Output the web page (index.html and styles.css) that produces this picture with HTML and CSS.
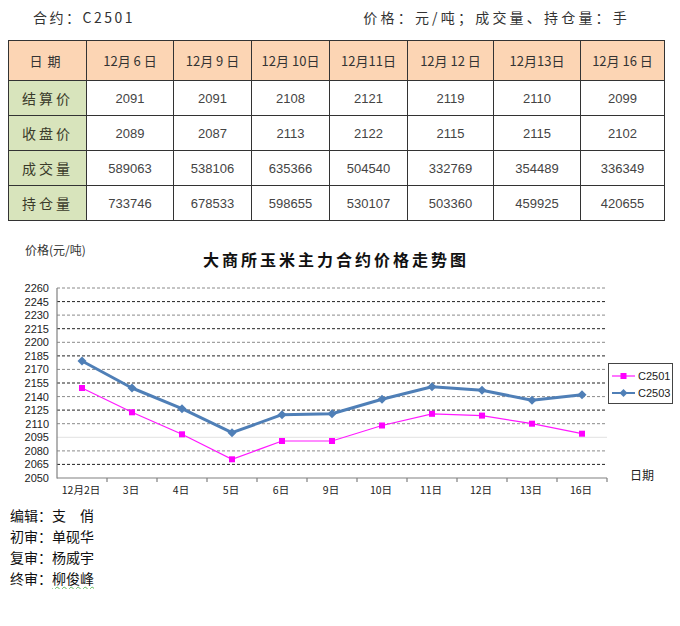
FILE: index.html
```html
<!DOCTYPE html>
<html lang="zh-CN">
<head>
<meta charset="utf-8">
<title>大商所玉米主力合约价格走势图</title>
<link rel="stylesheet" href="styles.css">
</head>
<body>
<div class="page">
  <div class="head">
    <span class="contract">合约：C2501</span>
    <span class="units">价格：元/吨；成交量、持仓量：手</span>
  </div>
  <table class="data">
    <colgroup>
      <col class="c0"><col class="c1"><col class="c2"><col class="c3"><col class="c4"><col class="c5"><col class="c6"><col class="c7">
    </colgroup>
    <thead>
      <tr>
        <th class="label">日期</th>
        <th>12月 6 日</th><th>12月 9 日</th><th>12月 10日</th><th>12月11日</th><th>12月 12 日</th><th>12月13日</th><th>12月 16 日</th>
      </tr>
    </thead>
    <tbody>
      <tr><th class="rowlabel">结算价</th><td>2091</td><td>2091</td><td>2108</td><td>2121</td><td>2119</td><td>2110</td><td>2099</td></tr>
      <tr><th class="rowlabel">收盘价</th><td>2089</td><td>2087</td><td>2113</td><td>2122</td><td>2115</td><td>2115</td><td>2102</td></tr>
      <tr><th class="rowlabel">成交量</th><td>589063</td><td>538106</td><td>635366</td><td>504540</td><td>332769</td><td>354489</td><td>336349</td></tr>
      <tr><th class="rowlabel">持仓量</th><td>733746</td><td>678533</td><td>598655</td><td>530107</td><td>503360</td><td>459925</td><td>420655</td></tr>
    </tbody>
  </table>

  <svg class="chart" width="680" height="284" viewBox="0 0 680 284" xmlns="http://www.w3.org/2000/svg">
    <g transform="translate(0,-220)">
      <text class="ytitle" x="25" y="254">价格(元/吨)</text>
      <text class="ctitle" x="336" y="265" text-anchor="middle">大商所玉米主力合约价格走势图</text>

      <g class="grid">
        <line class="g-light" x1="57" x2="607" y1="287" y2="287"/>
        <line class="g-dark" x1="57" x2="607" y1="300.6" y2="300.6"/>
        <line class="g-light" x1="57" x2="607" y1="314.1" y2="314.1"/>
        <line class="g-dark" x1="57" x2="607" y1="327.7" y2="327.7"/>
        <line class="g-light" x1="57" x2="607" y1="341.3" y2="341.3"/>
        <line class="g-dark" x1="57" x2="607" y1="354.9" y2="354.9"/>
        <line class="g-light" x1="57" x2="607" y1="368.4" y2="368.4"/>
        <line class="g-dark" x1="57" x2="607" y1="382" y2="382"/>
        <line class="g-light" x1="57" x2="607" y1="395.6" y2="395.6"/>
        <line class="g-dark" x1="57" x2="607" y1="409.1" y2="409.1"/>
        <line class="g-light" x1="57" x2="607" y1="422.7" y2="422.7"/>
        <line class="g-faint" x1="57" x2="607" y1="436.3" y2="436.3"/>
        <line class="g-light" x1="57" x2="607" y1="449.9" y2="449.9"/>
        <line class="g-dark" x1="57" x2="607" y1="463.4" y2="463.4"/>
      </g>

      <g class="ylab" text-anchor="end">
        <text x="49" y="291">2260</text>
        <text x="49" y="304.6">2245</text>
        <text x="49" y="318.1">2230</text>
        <text x="49" y="331.7">2215</text>
        <text x="49" y="345.3">2200</text>
        <text x="49" y="358.9">2185</text>
        <text x="49" y="372.4">2170</text>
        <text x="49" y="386">2155</text>
        <text x="49" y="399.6">2140</text>
        <text x="49" y="413.1">2125</text>
        <text x="49" y="426.7">2110</text>
        <text x="49" y="440.3">2095</text>
        <text x="49" y="453.9">2080</text>
        <text x="49" y="467.4">2065</text>
        <text x="49" y="481">2050</text>
      </g>

      <g class="axis">
        <line x1="57" y1="287" x2="57" y2="477.5"/>
        <line x1="57" y1="477" x2="607" y2="477"/>
        <line x1="107" y1="477" x2="107" y2="481"/>
        <line x1="157" y1="477" x2="157" y2="481"/>
        <line x1="207" y1="477" x2="207" y2="481"/>
        <line x1="257" y1="477" x2="257" y2="481"/>
        <line x1="307" y1="477" x2="307" y2="481"/>
        <line x1="357" y1="477" x2="357" y2="481"/>
        <line x1="407" y1="477" x2="407" y2="481"/>
        <line x1="457" y1="477" x2="457" y2="481"/>
        <line x1="507" y1="477" x2="507" y2="481"/>
        <line x1="557" y1="477" x2="557" y2="481"/>
        <line x1="607" y1="477" x2="607" y2="481"/>
      </g>

      <g class="xlab" text-anchor="middle">
        <text x="81" y="493">12月2日</text>
        <text x="131" y="493">3日</text>
        <text x="181" y="493">4日</text>
        <text x="231" y="493">5日</text>
        <text x="281" y="493">6日</text>
        <text x="331" y="493">9日</text>
        <text x="381" y="493">10日</text>
        <text x="431" y="493">11日</text>
        <text x="481" y="493">12日</text>
        <text x="531" y="493">13日</text>
        <text x="581" y="493">16日</text>
      </g>
      <text class="xtitle" x="630" y="479">日期</text>

      <polyline class="s-blue" points="82,360 132,387 182,407.7 232,431.7 282,413.7 332,412.7 382,398.3 432,385.7 482,389.3 532,399.3 582,393.7"/>
      <g class="m-blue">
        <path d="M82 355.5 L86.5 360 L82 364.5 L77.5 360 Z"/>
        <path d="M132 382.5 L136.5 387 L132 391.5 L127.5 387 Z"/>
        <path d="M182 403.2 L186.5 407.7 L182 412.2 L177.5 407.7 Z"/>
        <path d="M232 427.2 L236.5 431.7 L232 436.2 L227.5 431.7 Z"/>
        <path d="M282 409.2 L286.5 413.7 L282 418.2 L277.5 413.7 Z"/>
        <path d="M332 408.2 L336.5 412.7 L332 417.2 L327.5 412.7 Z"/>
        <path d="M382 393.8 L386.5 398.3 L382 402.8 L377.5 398.3 Z"/>
        <path d="M432 381.2 L436.5 385.7 L432 390.2 L427.5 385.7 Z"/>
        <path d="M482 384.8 L486.5 389.3 L482 393.8 L477.5 389.3 Z"/>
        <path d="M532 394.8 L536.5 399.3 L532 403.8 L527.5 399.3 Z"/>
        <path d="M582 389.2 L586.5 393.7 L582 398.2 L577.5 393.7 Z"/>
      </g>

      <polyline class="s-pink" points="82,387 132,411.3 182,433.3 232,458.3 282,440 332,440 382,424.5 432,412.8 482,414.6 532,422.7 582,432.7"/>
      <g class="m-pink">
        <rect x="79" y="384" width="6" height="6"/>
        <rect x="129" y="408.3" width="6" height="6"/>
        <rect x="179" y="430.3" width="6" height="6"/>
        <rect x="229" y="455.3" width="6" height="6"/>
        <rect x="279" y="437" width="6" height="6"/>
        <rect x="329" y="437" width="6" height="6"/>
        <rect x="379" y="421.5" width="6" height="6"/>
        <rect x="429" y="409.8" width="6" height="6"/>
        <rect x="479" y="411.6" width="6" height="6"/>
        <rect x="529" y="419.7" width="6" height="6"/>
        <rect x="579" y="429.7" width="6" height="6"/>
      </g>

      <g class="legend">
        <rect class="lg-box" x="608.5" y="362.5" width="64" height="40"/>
        <line class="s-pink" x1="612" y1="375" x2="635" y2="375"/>
        <rect class="m-pink" x="620.5" y="372" width="6" height="6"/>
        <text x="638" y="379">C2501</text>
        <line class="s-blue lg-blue" x1="612" y1="392" x2="635" y2="392"/>
        <path class="m-blue" d="M623.5 388 L627.5 392 L623.5 396 L619.5 392 Z"/>
        <text x="638" y="396">C2503</text>
      </g>
    </g>
  </svg>

  <div class="credits">
    <div>编辑：支　俏</div>
    <div>初审：单砚华</div>
    <div>复审：杨威宇</div>
    <div>终审：<span class="spell">柳俊峰</span></div>
  </div>
</div>
</body>
</html>
```

FILE: styles.css
```css
html, body {
  margin: 0;
  padding: 0;
  background: #ffffff;
}

body {
  font-family: "Noto Sans CJK SC", "Liberation Sans", sans-serif;
  color: #222;
}

.page {
  width: 680px;
}

.head {
  height: 34px;
  display: flex;
  justify-content: space-between;
  align-items: center;
  padding: 0 50px 0 33px;
  font-size: 14px;
  letter-spacing: 2.5px;
  color: #333;
}

.head .units {
  letter-spacing: 3.2px;
}

.data {
  margin: 6px 0 0 8px;
  border-collapse: collapse;
  table-layout: fixed;
  width: 656px;
  border: 1.5px solid #222;
}

.c0 { width: 78px; }
.c1 { width: 87px; }
.c2 { width: 78px; }
.c3 { width: 78px; }
.c4 { width: 78px; }
.c5 { width: 86px; }
.c6 { width: 87px; }
.c7 { width: 84px; }

.data th,
.data td {
  border: 1px solid #333;
  text-align: center;
  padding: 0;
  font-weight: 400;
  white-space: nowrap;
}

.data thead th {
  height: 39px;
  background: #fcd5b4;
  font-size: 13px;
  color: #333;
}

.data thead th.label {
  letter-spacing: 5px;
}

.data tbody th,
.data tbody td {
  height: 34px;
}

.data .rowlabel {
  background: #d8e4bc;
  font-size: 14px;
  letter-spacing: 3px;
  color: #3a3a2a;
}

.data td {
  font-family: "Liberation Sans", "DejaVu Sans", sans-serif;
  font-size: 13px;
  color: #444;
}

.chart {
  display: block;
}

.ytitle {
  font-family: "Noto Sans CJK SC", sans-serif;
  font-size: 12px;
  fill: #333;
}

.ctitle {
  font-family: "Noto Sans CJK SC", sans-serif;
  font-size: 16px;
  font-weight: 600;
  letter-spacing: 3px;
  fill: #111;
}

.g-dark {
  stroke: #222;
  stroke-width: 1;
  stroke-dasharray: 3 2;
}

.g-light {
  stroke: #8a8a8a;
  stroke-width: 1;
  stroke-dasharray: 3 2;
}

.g-faint {
  stroke: #e2e2e2;
  stroke-width: 1;
}

.ylab text {
  font-family: "Liberation Sans", sans-serif;
  font-size: 11px;
  fill: #222;
}

.axis line {
  stroke: #808080;
  stroke-width: 1.2;
}

.xlab text {
  font-family: "Noto Sans CJK SC", sans-serif;
  font-size: 10.5px;
  fill: #222;
}

.xtitle {
  font-family: "Noto Sans CJK SC", sans-serif;
  font-size: 12px;
  fill: #222;
}

.s-blue {
  fill: none;
  stroke: #4f7fb7;
  stroke-width: 3;
  stroke-linejoin: round;
}

.lg-blue {
  stroke-width: 2;
}

.m-blue,
.m-blue path {
  fill: #4f7fb7;
}

.s-pink {
  fill: none;
  stroke: #ff19ff;
  stroke-width: 1.2;
}

.m-pink,
.m-pink rect {
  fill: #ff00ff;
}

.lg-box {
  fill: #fff;
  stroke: #444;
  stroke-width: 1;
}

.legend text {
  font-family: "Liberation Sans", sans-serif;
  font-size: 11px;
  fill: #222;
}

.credits {
  padding-left: 10px;
  font-size: 14px;
  line-height: 21px;
  color: #111;
}

.spell {
  text-decoration: underline wavy #5cb85c;
  text-decoration-thickness: 1px;
  text-underline-offset: 2px;
}
```
